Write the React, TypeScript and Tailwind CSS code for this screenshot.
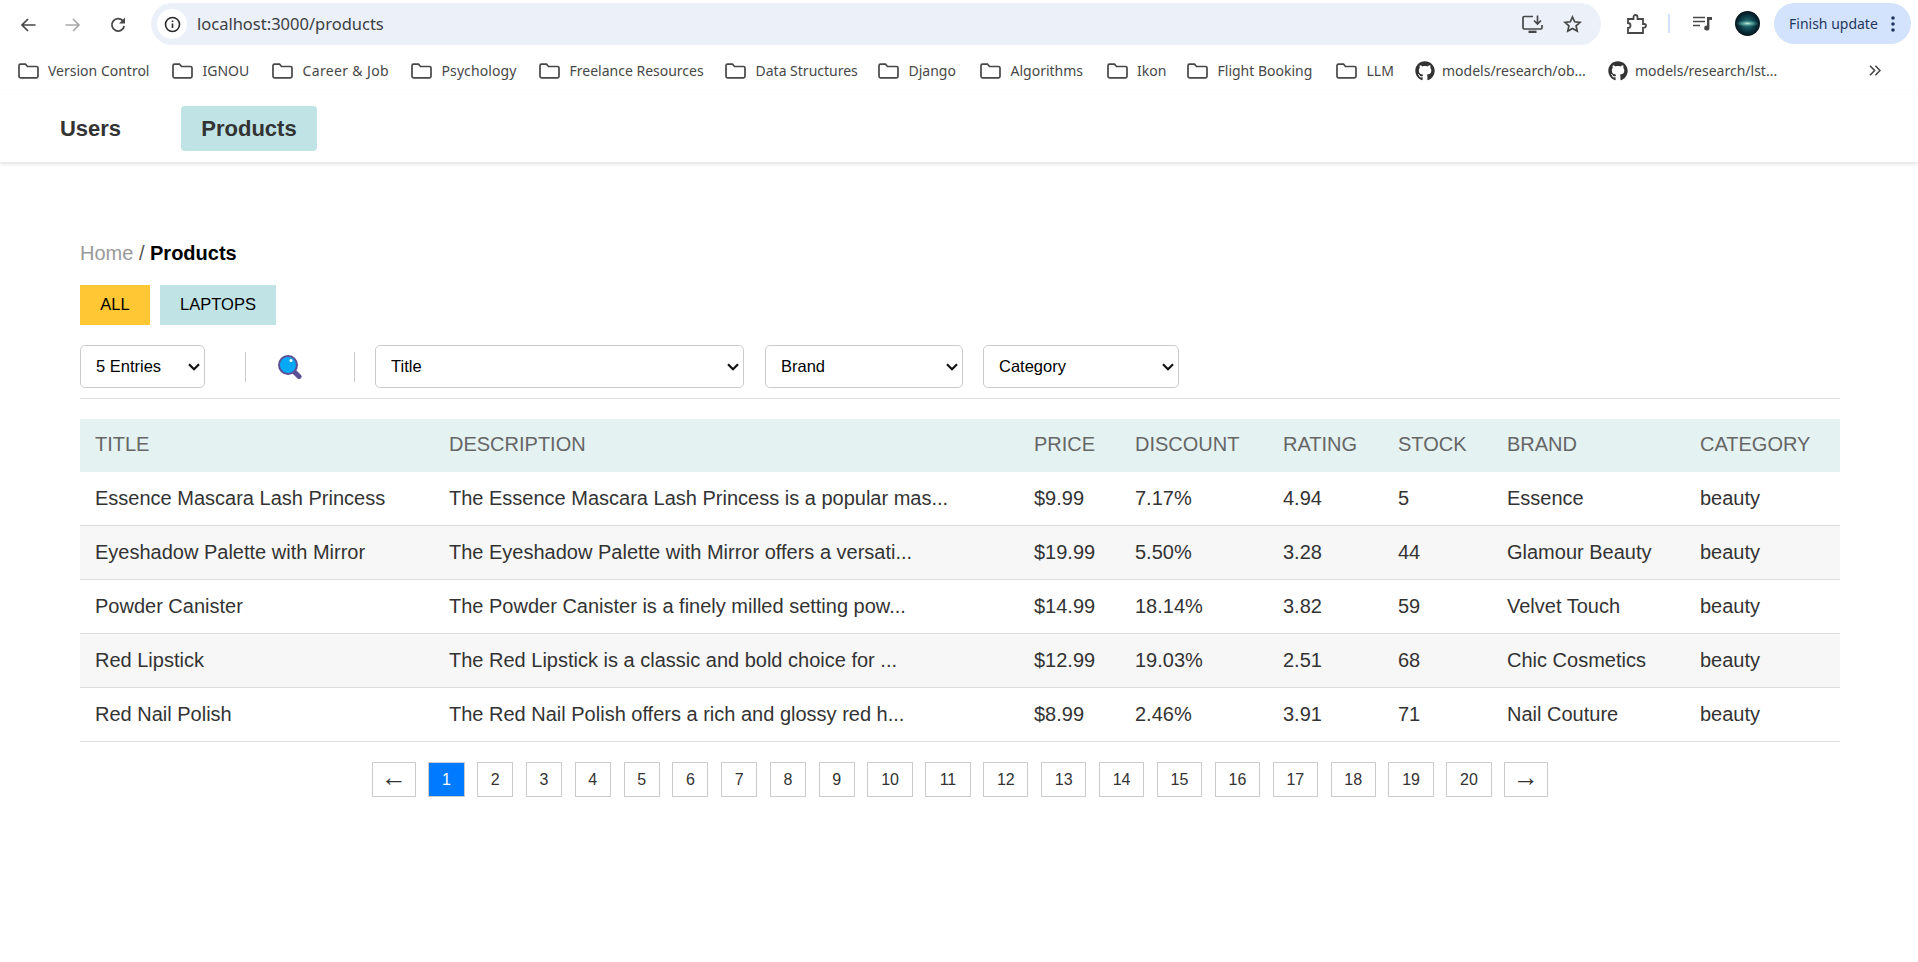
import { FaGithub } from 'react-icons/fa'

const chromeFont = "font-['Noto_Sans',sans-serif]"

const bookmarks = [
  { label: 'Version Control', width: 'w-[154.5px]', tracking: '' },
  { label: 'IGNOU', width: 'w-[100px]', tracking: '' },
  { label: 'Career & Job', width: 'w-[139px]', tracking: 'tracking-[0.35px]' },
  { label: 'Psychology', width: 'w-[128px]', tracking: 'tracking-[0.1px]' },
  { label: 'Freelance Resources', width: 'w-[186px]', tracking: '' },
  { label: 'Data Structures', width: 'w-[153px]', tracking: '' },
  { label: 'Django', width: 'w-[102px]', tracking: '' },
  { label: 'Algorithms', width: 'w-[126.5px]', tracking: '' },
  { label: 'Ikon', width: 'w-[80.5px]', tracking: '' },
  { label: 'Flight Booking', width: 'w-[149px]', tracking: '' },
  { label: 'LLM', width: 'w-[79px]', tracking: '' },
]

const products = [
  ['Essence Mascara Lash Princess', 'The Essence Mascara Lash Princess is a popular mas...', '$9.99', '7.17%', '4.94', '5', 'Essence', 'beauty'],
  ['Eyeshadow Palette with Mirror', 'The Eyeshadow Palette with Mirror offers a versati...', '$19.99', '5.50%', '3.28', '44', 'Glamour Beauty', 'beauty'],
  ['Powder Canister', 'The Powder Canister is a finely milled setting pow...', '$14.99', '18.14%', '3.82', '59', 'Velvet Touch', 'beauty'],
  ['Red Lipstick', 'The Red Lipstick is a classic and bold choice for ...', '$12.99', '19.03%', '2.51', '68', 'Chic Cosmetics', 'beauty'],
  ['Red Nail Polish', 'The Red Nail Polish offers a rich and glossy red h...', '$8.99', '2.46%', '3.91', '71', 'Nail Couture', 'beauty'],
]

const columns = [
  { label: 'Title', width: 'w-[354px]' },
  { label: 'Description', width: 'w-[585px]' },
  { label: 'Price', width: 'w-[101px]' },
  { label: 'Discount', width: 'w-[148px]' },
  { label: 'Rating', width: 'w-[115px]' },
  { label: 'Stock', width: 'w-[109px]' },
  { label: 'Brand', width: 'w-[193px]' },
  { label: 'Category', width: 'w-[155px]' },
]

function FolderIcon() {
  return (
    <svg width="21" height="16" viewBox="0 0 21 16" fill="none" stroke="#474747" strokeWidth="1.7" className="shrink-0">
      <path d="M2.5 1.2h5l2 2.3h9a1.5 1.5 0 0 1 1.5 1.5v8.3a1.5 1.5 0 0 1-1.5 1.5h-16A1.5 1.5 0 0 1 1 13.3V2.7a1.5 1.5 0 0 1 1.5-1.5z" />
    </svg>
  )
}

function ChromeBar() {
  return (
    <div className="flex h-[45px] items-start bg-white">
      {/* Back, forward, reload */}
      <svg width="16" height="14" viewBox="0 0 16 14" fill="none" stroke="#474747" strokeWidth="1.7" className="ml-[20px] mt-[18px]">
        <path d="M15.5 7H2M8 1L2 7l6 6" />
      </svg>
      <svg width="16" height="14" viewBox="0 0 16 14" fill="none" stroke="#a9a9a9" strokeWidth="1.7" className="ml-[29px] mt-[18px]">
        <path d="M0.5 7H14M8 1l6 6-6 6" />
      </svg>
      <svg width="16" height="16" viewBox="0 0 16 16" fill="none" className="ml-[29px] mt-[17px]">
        <path d="M13.2 4.3A6.2 6.2 0 1 0 14.2 9" stroke="#474747" strokeWidth="1.8" />
        <path d="M15 0.5v6h-6z" fill="#474747" />
      </svg>

      {/* Address bar */}
      <div className="ml-[25px] mt-[3px] flex h-[42px] w-[1450px] items-center rounded-full bg-[#ebf0f9] pl-[6px]">
        <div className="flex h-[30px] w-[30px] items-center justify-center rounded-full bg-white">
          <svg width="17" height="17" viewBox="0 0 17 17" fill="none" stroke="#2b2b2b" strokeWidth="1.6">
            <circle cx="8.5" cy="8.5" r="7" />
            <path d="M8.5 7.5v4.5M8.5 4.5v1.6" />
          </svg>
        </div>
        <span className={`ml-[10px] text-[16.5px] text-[#3c4043] ${chromeFont}`}>localhost:3000/products</span>
        <svg width="21" height="18" viewBox="0 0 21 18" fill="none" stroke="#474747" strokeWidth="1.7" className="ml-auto">
          <path d="M11 1.5H2.2A1.2 1.2 0 0 0 1 2.7v10.1A1.2 1.2 0 0 0 2.2 14h16.6a1.2 1.2 0 0 0 1.2-1.2V10" />
          <path d="M6.5 16.8h8" strokeWidth="2.4" />
          <path d="M15.5 0.5v8M12 5.5l3.5 3.5L19 5.5" />
        </svg>
        <svg width="19" height="18" viewBox="0 0 19 18" fill="none" stroke="#474747" strokeWidth="1.7" className="ml-[20px] mr-[19px]">
          <path d="M9.5 2l2.2 4.8 5.3.6-3.9 3.5 1.1 5.2-4.7-2.7-4.7 2.7 1.1-5.2L2 7.4l5.3-.6z" />
        </svg>
      </div>

      {/* Extensions, media, profile */}
      <svg width="21" height="20" viewBox="0 0 21 20" fill="none" stroke="#474747" strokeWidth="1.8" className="ml-[25px] mt-[14px]">
        <path d="M2 5h5.5V3a2 2 0 0 1 4 0v2H17v5h1.2a1.8 1.8 0 0 1 0 3.6H17V19H2v-5a2.5 2.5 0 0 0 0-5z" />
      </svg>
      <div className="ml-[21px] mt-[14px] h-[19px] w-[2px] bg-[#d3e3fd]" />
      <svg width="19" height="15" viewBox="0 0 19 15" fill="none" className="ml-[23px] mt-[16px]">
        <path d="M0 1.5h12M0 5.5h12M0 9.5h7" stroke="#474747" strokeWidth="1.7" />
        <path d="M14 1h5v3h-2.6v8a2.6 2.6 0 1 1-2.4-2.6z" fill="#474747" />
      </svg>
      <svg width="25" height="25" viewBox="0 0 25 25" className="ml-[23px] mt-[11px]">
        <defs>
          <radialGradient id="avatarBase">
            <stop offset="0" stopColor="#2a7d80" />
            <stop offset="0.6" stopColor="#0c3a45" />
            <stop offset="1" stopColor="#03121a" />
          </radialGradient>
          <radialGradient id="avatarGlow">
            <stop offset="0" stopColor="#c9ead6" />
            <stop offset="0.5" stopColor="#58a9a3" stopOpacity="0.7" />
            <stop offset="1" stopColor="#2a7d80" stopOpacity="0" />
          </radialGradient>
        </defs>
        <circle cx="12.5" cy="12.5" r="12.5" fill="url(#avatarBase)" />
        <ellipse cx="12.5" cy="12.5" rx="12" ry="3.5" fill="url(#avatarGlow)" />
      </svg>
      <div className="ml-[14px] mt-[3px] flex h-[41px] w-[137px] items-center rounded-full bg-[#d3e3fd] pl-[15px]">
        <span className={`text-[14px] text-[#1f3760] ${chromeFont}`}>Finish update</span>
        <svg width="4" height="16" viewBox="0 0 4 16" fill="#1f3760" className="ml-[13px]">
          <circle cx="2" cy="2" r="1.8" />
          <circle cx="2" cy="8" r="1.8" />
          <circle cx="2" cy="14" r="1.8" />
        </svg>
      </div>
    </div>
  )
}

function BookmarksBar() {
  return (
    <div className={`flex h-[50px] items-center bg-white pl-[17.5px] pt-[1px] text-[14px] text-[#474747] ${chromeFont}`}>
      {bookmarks.map((b) => (
        <div key={b.label} className={`flex items-center gap-[9.5px] whitespace-nowrap ${b.width}`}>
          <FolderIcon />
          <span className={b.tracking}>{b.label}</span>
        </div>
      ))}
      <div className="flex w-[193px] items-center gap-[7px] whitespace-nowrap">
        <FaGithub size={20} color="#333" className="shrink-0" />
        <span>models/research/ob...</span>
      </div>
      <div className="flex w-[261px] items-center gap-[7px] whitespace-nowrap">
        <FaGithub size={20} color="#333" className="shrink-0" />
        <span>models/research/lst...</span>
      </div>
      <svg width="12" height="11" viewBox="0 0 12 11" fill="none" stroke="#474747" strokeWidth="1.6">
        <path d="M1 0.8l4.6 4.7L1 10.2M6.4 0.8L11 5.5l-4.6 4.7" />
      </svg>
    </div>
  )
}

function SearchIcon() {
  return (
    <svg width="24" height="24" viewBox="0 0 24 24" className="ml-[32px] shrink-0">
      <path d="M15 15.5l6 6" stroke="#5c4f95" strokeWidth="5" strokeLinecap="round" />
      <circle cx="10" cy="10" r="9" fill="#03a9f4" stroke="#5c4f95" strokeWidth="2" />
      <circle cx="13" cy="5.5" r="1.5" fill="#ffffff" />
    </svg>
  )
}

function Select({ label, className }: { label: string; className: string }) {
  return (
    <div className={`relative h-[43px] ${className}`}>
      <select className="h-full w-full appearance-none rounded-[5px] border border-[#ccc] bg-white pl-[15px] text-[16.5px] text-black">
        <option>{label}</option>
      </select>
      <svg width="12" height="8" viewBox="0 0 12 8" fill="none" stroke="#111" strokeWidth="2.2" className="pointer-events-none absolute right-[5px] top-[18px]">
        <path d="M1 1.2l5 5 5-5" />
      </svg>
    </div>
  )
}

function Pagination() {
  const pages = Array.from({ length: 20 }, (_, i) => i + 1)
  const box = 'flex h-[35px] items-center justify-center border border-[#ccc] text-[16px]'
  return (
    <div className="mt-[20px] flex justify-center gap-[12.6px]">
      <button className={`${box} w-[43.5px] pb-[5px] text-[26px] leading-none text-[#333]`}>←</button>
      {pages.map((p) => (
        <button
          key={p}
          className={`${box} ${p < 10 ? 'w-[36.2px]' : 'w-[45.3px]'} ${p === 1 ? 'bg-[#007bff] text-white' : 'text-[#333]'}`}
        >
          {p}
        </button>
      ))}
      <button className={`${box} w-[43.5px] pb-[5px] text-[26px] leading-none text-[#333]`}>→</button>
    </div>
  )
}

export default function App() {
  return (
    <div className="min-h-[962px] bg-white font-['Liberation_Sans',Arial,sans-serif]">
      <ChromeBar />
      <BookmarksBar />

      {/* App nav */}
      <nav className="flex h-[67px] items-center gap-[39px] pl-[39px] shadow-[0_2px_4px_rgba(0,0,0,0.12)]">
        <a className="flex h-[45px] w-[103px] items-center justify-center rounded-[4px] text-[22px] font-bold text-[#333]">Users</a>
        <a className="flex h-[45px] w-[136px] items-center justify-center rounded-[4px] bg-[#c0e3e5] text-[22px] font-bold text-[#333]">Products</a>
      </nav>

      <main className="pl-[80px] pr-[78px] pt-[78px]">
        {/* Breadcrumb */}
        <div className="text-[20px] leading-[27px] text-[#555]">
          <span className="text-[#999]">Home</span> / <span className="font-bold text-black">Products</span>
        </div>

        {/* Quick filters */}
        <div className="mt-[18px] flex gap-[10px]">
          <button className="h-[40px] w-[70px] bg-[#ffc733] pb-[1px] text-[16.5px] text-black">ALL</button>
          <button className="h-[40px] w-[116px] bg-[#c0e3e5] pb-[1px] text-[16.5px] text-black">LAPTOPS</button>
        </div>

        {/* Filter row */}
        <div className="mt-[20px] flex items-center border-b border-[#ddd] pb-[10px]">
          <Select label="5 Entries" className="w-[125px]" />
          <div className="ml-[40px] h-[30px] w-px bg-[#ccc]" />
          <SearchIcon />
          <div className="ml-[52px] h-[30px] w-px bg-[#ccc]" />
          <Select label="Title" className="ml-[20px] w-[369px]" />
          <Select label="Brand" className="ml-[21px] w-[198px]" />
          <Select label="Category" className="ml-[20px] w-[196px]" />
        </div>

        {/* Products table */}
        <table className="mt-[20px] w-full table-fixed border-separate border-spacing-0">
          <thead>
            <tr className="h-[53px] bg-[#e4f2f2]">
              {columns.map((c) => (
                <th key={c.label} className={`${c.width} pb-[3px] pl-[15px] text-left text-[20px] font-normal uppercase text-[#666]`}>
                  {c.label}
                </th>
              ))}
            </tr>
          </thead>
          <tbody>
            {products.map((row, i) => (
              <tr key={row[0]} className={`h-[54px] ${i % 2 === 1 ? 'bg-[#f7f7f7]' : 'bg-white'}`}>
                {row.map((cell, j) => (
                  <td key={j} className="whitespace-nowrap border-b border-[#ddd] pb-[2px] pl-[15px] text-[20px] text-[#333]">
                    {cell}
                  </td>
                ))}
              </tr>
            ))}
          </tbody>
        </table>

        <Pagination />
      </main>
    </div>
  )
}
